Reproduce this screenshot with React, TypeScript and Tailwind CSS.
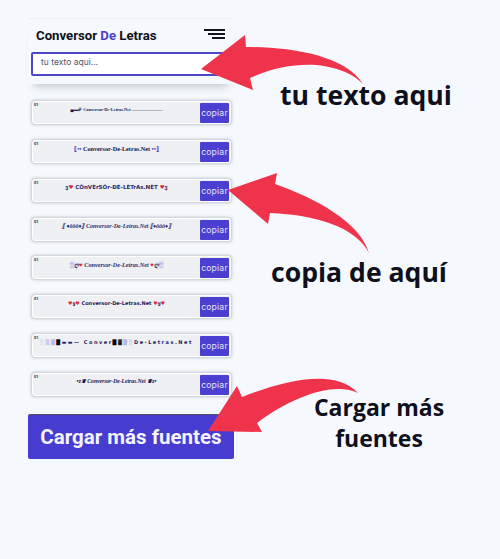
const rows = [
  { size: 'text-[4.4px]', text: <span className="font-['Liberation_Serif'] font-bold">▄▬ℱ Conversor-De-Letras.Net ———————</span> },
  { size: 'text-[6.2px]', text: <span className="font-['Liberation_Serif'] font-bold text-[#14124a]"><span className="text-[#4a3fd0]">⟦••</span> Conversor-De-Letras.Net <span className="text-[#4a3fd0]">••⟧</span></span> },
  { size: 'text-[5.5px]', text: <span className="font-['DejaVu_Sans'] font-bold text-[#2b2a6b]">ჳ<span className="text-[#e0263c]">♥</span> CÔnVÈrSÔr-ÐÈ-LÈTrAs.NÈT <span className="text-[#e0263c]">♥</span>ჳ</span> },
  { size: 'text-[6px]', text: <span className="font-['Liberation_Serif'] italic font-bold text-[#2b2a6b]">⟦ ♦ôôô♦⟧ Conversor-De-Letras.Net ⟦♦ôôô♦⟧</span> },
  { size: 'text-[6.2px]', text: <span className="font-['Liberation_Serif'] italic font-bold text-[#2b2a6b]"><span className="text-[#7a72d8]">▒</span>ღ<span className="text-[#e0263c]">♥</span> Conversor-De-Letras.Net <span className="text-[#e0263c]">♥</span>ღ<span className="text-[#7a72d8]">▒</span></span> },
  { size: 'text-[5px]', text: <span className="font-['DejaVu_Sans'] font-bold text-[#23225e]"><span className="text-[#e0263c]">♥</span>ყ<span className="text-[#e0263c]">♥</span> Conversor-De-Letras.Net <span className="text-[#e0263c]">♥</span>ყ<span className="text-[#e0263c]">♥</span></span> },
  { size: 'text-[5px]', text: <span className="font-['DejaVu_Sans'] font-bold tracking-[1.5px] text-[#23225e]"><span className="text-[#b5afe8]">░▒▓</span><span className="text-black">█</span>▬▬— Conver<span className="text-black">█▓</span><span className="text-[#8f88dc]">▒░</span>De-Letras.Net</span> },
  { size: 'text-[5.6px]', text: <span className="font-['Liberation_Serif'] italic font-bold text-[#14124a]">•ʚ♛ Conversor-De-Letras.Net ♛ɞ•</span> },
];

function Arrow({ d }: { d: string }) {
  return <path d={d} fill="#ee334b" />;
}

export default function App() {
  return (
    <div className="relative w-[500px] h-[559px] overflow-hidden bg-[#f5f9fd] font-['Roboto',sans-serif]">
      <div className="ml-[28px] w-[206px] pt-[18px]">
        <div className="border-t border-[#eceff2] shadow-[0_8px_8px_-6px_rgba(60,70,90,0.3)] pb-[8px]">
          <div className="flex items-center justify-between pl-[8px] pr-[9px] h-[33px]">
            <div className="text-[13.2px] leading-[18px] font-bold text-[#0f0f1a]">
              Conversor <span className="text-[#4a3fd0]">De</span> Letras
            </div>
            <div className="flex flex-col items-end gap-[2px] mt-[-3px]">
              <div className="w-[21px] h-[2px] bg-[#14141f]" />
              <div className="w-[17px] h-[2px] bg-[#14141f]" />
              <div className="w-[13px] h-[2px] bg-[#14141f]" />
            </div>
          </div>
          <div className="mx-[3px] h-[24px] rounded-[2px] border-2 border-[#4f46c8] bg-white flex items-center pl-[8px]">
            <span className="text-[8.5px] text-[#55556a] font-['Inter',sans-serif] mt-[-3px]">tu texto aqui...</span>
          </div>
        </div>

        <div className="mt-[17px] flex flex-col gap-[15.85px] px-[4px]">
          {rows.map((row, i) => (
            <div
              key={i}
              className="relative h-[23px] w-[199px] rounded-[3px] bg-[#eef0f3] border border-white shadow-[0_0_3px_1px_rgba(70,75,95,0.3)] flex"
            >
              <span className="absolute left-[1px] top-[0px] text-[4px] leading-[5px] font-bold text-[#333]">01</span>
              <div className={`flex-1 min-w-0 overflow-hidden flex justify-center whitespace-nowrap leading-[7px] pt-[4px] text-[#1c1b4b] ${row.size}`}>
                {row.text}
              </div>
              <button className="w-[29px] h-[20px] mt-[1px] mr-[1px] rounded-[1px] bg-[#4a3fd0] text-[8.6px] leading-[20px] text-[#e4e2fa] tracking-[0.2px] font-['Inter',sans-serif]">
                copiar
              </button>
            </div>
          ))}
        </div>

        <button className="mt-[18px] w-full h-[45px] rounded-[2px] bg-[#473cd0] border-t border-[#555566] text-[20.5px] font-bold text-[#f4f3ff]">
          Cargar más fuentes
        </button>
      </div>

      <svg className="absolute inset-0 pointer-events-none" width="500" height="559" viewBox="0 0 500 559">
        <Arrow d="M201 69 L245 35 L246 47 C 290 47 345 55 363 84 C 345 65 300 55 250 78 L253 90 Z" />
        <Arrow d="M228 190 L277 173 L275 184 C 315 198 360 222 369 253 C 355 226 315 215 270 213 L268 224 Z" />
        <Arrow d="M208 431 L237 386 L242 397 C 285 380 335 368 358 393 C 335 382 295 395 257 423 L262 432 Z" />
      </svg>

      <div className="absolute left-[280px] top-[77px] text-[26.6px] leading-[36px] font-bold text-[#10101c] font-['Open_Sans',sans-serif] whitespace-nowrap">
        tu texto aqui
      </div>
      <div className="absolute left-[271px] top-[254px] text-[26.6px] leading-[36px] font-bold text-[#10101c] font-['Open_Sans',sans-serif] whitespace-nowrap">
        copia de aquí
      </div>
      <div className="absolute left-[300px] top-[392px] w-[158px] text-center text-[23px] leading-[31px] font-bold text-[#10101c] font-['Open_Sans',sans-serif]">
        Cargar más fuentes
      </div>
    </div>
  );
}
